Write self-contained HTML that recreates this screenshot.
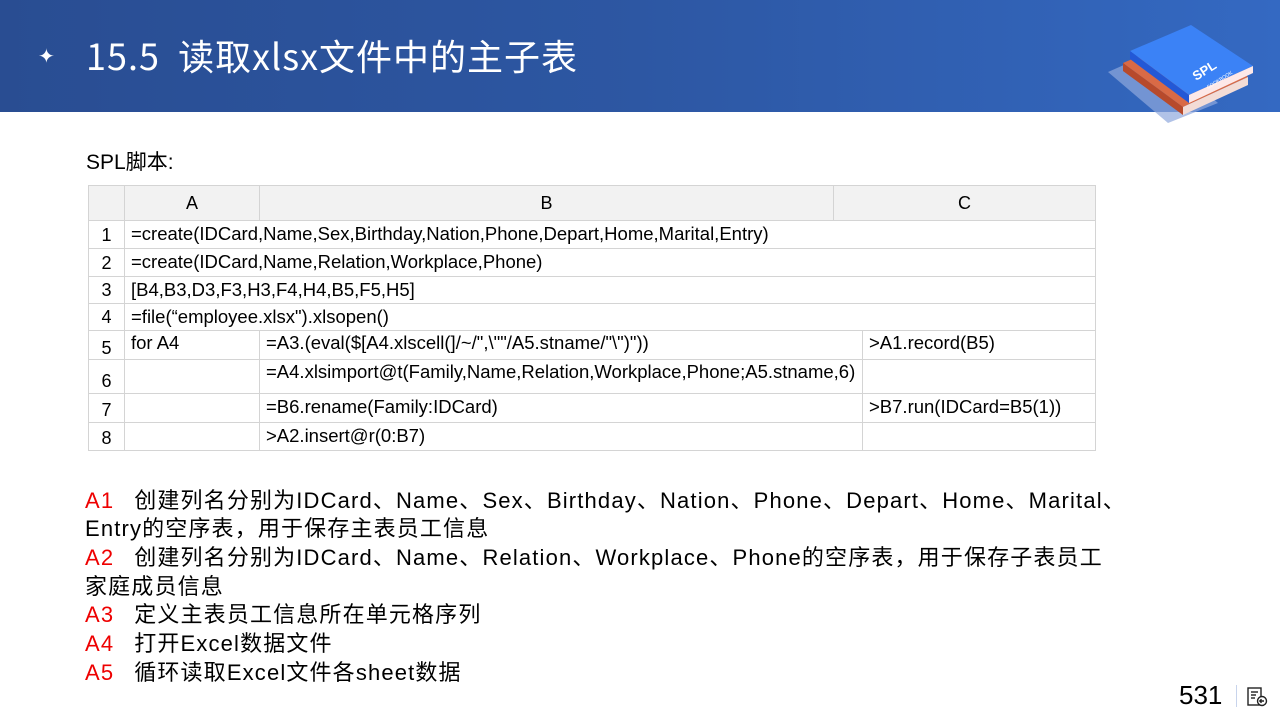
<!DOCTYPE html>
<html><head><meta charset="utf-8"><style>
*{margin:0;padding:0;box-sizing:border-box}
body{width:1280px;height:720px;position:relative;background:#fff;overflow:hidden;font-family:"Liberation Sans","Noto Sans CJK SC",sans-serif;color:#000}
.hdr{position:absolute;left:0;top:0;width:1280px;height:112px;background:linear-gradient(90deg,#294d92 0%,#2d57a3 50%,#3469c2 100%)}
.title{position:absolute;left:86px;top:29px;color:#fff;font-size:36px;font-family:"Noto Sans CJK SC","Liberation Sans",sans-serif;white-space:nowrap;letter-spacing:1px;font-weight:400}
.star{position:absolute;left:38px;top:44px;color:#fff;font-size:20px}
.c{position:absolute;border:1px solid #d4d4d4;font-size:18.5px;line-height:1;white-space:nowrap;padding-left:6px;display:flex;align-items:center;overflow:visible;font-family:"Liberation Sans",sans-serif}
.h{background:#f2f2f2;justify-content:center;padding-left:0;font-size:18px}
.n{justify-content:center;padding-left:0;font-size:18px}
.d{position:absolute;left:85px;font-size:22px;letter-spacing:1.15px;white-space:nowrap;line-height:29px}
.r{color:#e00;}
.sp{display:inline-block;width:20px}
</style></head><body>
<div class="hdr"></div>
<div class="star">✦</div>
<div class="title">15.5&nbsp; 读取xlsx文件中的主子表</div>
<svg style="position:absolute;left:1098px;top:15px" width="160" height="110" viewBox="0 0 160 110">
<polygon points="10,57 60,35 120,88 70,108" fill="#8fa8dd" opacity="0.7"/>
<polygon points="25,48 90,20 150,62 85,92" fill="#d96a46"/>
<polygon points="25,48 25,56 85,100 85,92" fill="#b74a2c"/>
<polygon points="85,92 150,62 150,70 85,100" fill="#f3dcd6"/>
<polygon points="32,36 93,10 155,51 91,80" fill="#3b82f6"/>
<polygon points="32,36 32,44 91,88 91,80" fill="#2358d6"/>
<polygon points="91,80 155,51 155,58 91,88" fill="#fde8e8"/>
<text x="98" y="66" fill="#fff" font-size="13" font-weight="bold" font-family="Liberation Sans" transform="rotate(-32 98 66)">SPL</text>
<text x="110" y="74" fill="#fff" font-size="5" font-family="Liberation Sans" transform="rotate(-32 110 74)">COOKBOOK</text>
</svg>
<div style="position:absolute;left:86px;top:146px;font-size:21px">SPL脚本:</div>

<div class="c h" style="left:88px;top:185px;width:37px;height:36px"></div>
<div class="c h" style="left:124px;top:185px;width:136px;height:36px">A</div>
<div class="c h" style="left:259px;top:185px;width:575px;height:36px">B</div>
<div class="c h" style="left:833px;top:185px;width:263px;height:36px">C</div>

<div class="c n" style="left:88px;top:220px;width:37px;height:29px">1</div>
<div class="c" style="left:124px;top:220px;width:972px;height:29px">=create(IDCard,Name,Sex,Birthday,Nation,Phone,Depart,Home,Marital,Entry)</div>
<div class="c n" style="left:88px;top:248px;width:37px;height:29px">2</div>
<div class="c" style="left:124px;top:248px;width:972px;height:29px">=create(IDCard,Name,Relation,Workplace,Phone)</div>
<div class="c n" style="left:88px;top:276px;width:37px;height:28px">3</div>
<div class="c" style="left:124px;top:276px;width:972px;height:28px">[B4,B3,D3,F3,H3,F4,H4,B5,F5,H5]</div>
<div class="c n" style="left:88px;top:303px;width:37px;height:28px">4</div>
<div class="c" style="left:124px;top:303px;width:972px;height:28px">=file(“employee.xlsx").xlsopen()</div>

<div class="c n" style="left:88px;top:330px;width:37px;height:30px;padding-top:6px">5</div>
<div class="c" style="left:124px;top:330px;width:136px;height:30px;align-items:flex-start;padding-top:3px">for A4</div>
<div class="c" style="left:259px;top:330px;width:604px;height:30px;align-items:flex-start;padding-top:3px">=A3.(eval($[A4.xlscell(]/~/",\""/A5.stname/"\")"))</div>
<div class="c" style="left:862px;top:330px;width:234px;height:30px;align-items:flex-start;padding-top:3px">&gt;A1.record(B5)</div>

<div class="c n" style="left:88px;top:359px;width:37px;height:35px;padding-top:8px">6</div>
<div class="c" style="left:124px;top:359px;width:136px;height:35px"></div>
<div class="c" style="left:259px;top:359px;width:604px;height:35px;align-items:flex-start;padding-top:3px">=A4.xlsimport@t(Family,Name,Relation,Workplace,Phone;A5.stname,6)</div>
<div class="c" style="left:862px;top:359px;width:234px;height:35px"></div>

<div class="c n" style="left:88px;top:393px;width:37px;height:30px;padding-top:4px">7</div>
<div class="c" style="left:124px;top:393px;width:136px;height:30px"></div>
<div class="c" style="left:259px;top:393px;width:604px;height:30px;align-items:flex-start;padding-top:4px">=B6.rename(Family:IDCard)</div>
<div class="c" style="left:862px;top:393px;width:234px;height:30px;align-items:flex-start;padding-top:4px">&gt;B7.run(IDCard=B5(1))</div>

<div class="c n" style="left:88px;top:422px;width:37px;height:29px;padding-top:2px">8</div>
<div class="c" style="left:124px;top:422px;width:136px;height:29px"></div>
<div class="c" style="left:259px;top:422px;width:604px;height:29px;align-items:flex-start;padding-top:4px">&gt;A2.insert@r(0:B7)</div>
<div class="c" style="left:862px;top:422px;width:234px;height:29px"></div>

<div class="d" style="top:486px"><span class="r">A1</span><span class="sp"></span>创建列名分别为IDCard、Name、Sex、Birthday、Nation、Phone、Depart、Home、Marital、</div>
<div class="d" style="top:514px">Entry的空序表，用于保存主表员工信息</div>
<div class="d" style="top:543px"><span class="r">A2</span><span class="sp"></span>创建列名分别为IDCard、Name、Relation、Workplace、Phone的空序表，用于保存子表员工</div>
<div class="d" style="top:572px">家庭成员信息</div>
<div class="d" style="top:600px"><span class="r">A3</span><span class="sp"></span>定义主表员工信息所在单元格序列</div>
<div class="d" style="top:629px"><span class="r">A4</span><span class="sp"></span>打开Excel数据文件</div>
<div class="d" style="top:658px"><span class="r">A5</span><span class="sp"></span>循环读取Excel文件各sheet数据</div>

<div style="position:absolute;left:1179px;top:680px;font-size:26px">531</div>
<div style="position:absolute;left:1236px;top:685px;width:1px;height:22px;background:#c8d4ec"></div>
<svg style="position:absolute;left:1246px;top:686px" width="22" height="22" viewBox="0 0 22 22" fill="none" stroke="#222" stroke-width="1.4">
<rect x="2" y="2" width="13" height="17"/><line x1="5" y1="6" x2="12" y2="6"/><line x1="5" y1="9" x2="10" y2="9"/><line x1="5" y1="12" x2="9" y2="12"/>
<circle cx="16" cy="15" r="4.5" fill="#fff"/><path d="M18 15H14M15.5 13.2L13.8 15L15.5 16.8"/>
</svg>
</body></html>
